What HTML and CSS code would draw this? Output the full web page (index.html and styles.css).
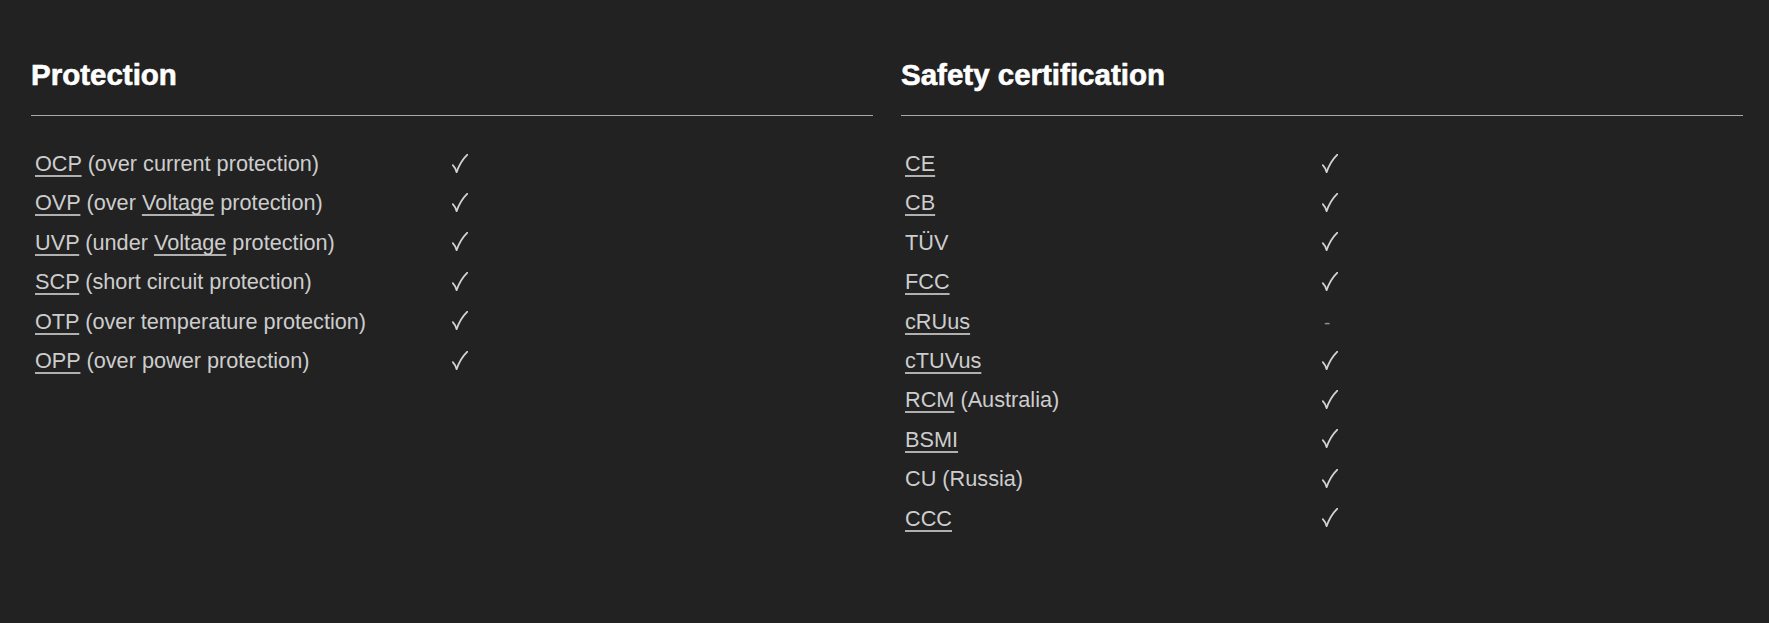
FILE: index.html
```html
<!DOCTYPE html>
<html lang="en">
<head>
<meta charset="utf-8">
<title>Specs</title>
<link rel="stylesheet" href="styles.css">
</head>
<body>
<svg width="0" height="0" class="defs" aria-hidden="true">
  <symbol id="check" viewBox="0 0 16 19">
    <path d="M0.8 11.2 Q3.2 13.6 4.6 18.2 Q8.2 7.6 15.4 0.6" fill="none" stroke="currentColor" stroke-width="1.8" stroke-linecap="round" stroke-linejoin="round"/>
  </symbol>
</svg>
<div class="specs">
  <section class="spec">
    <h2 class="spec-title">Protection</h2>
    <div class="spec-rows">
      <div class="label"><abbr>OCP</abbr> (over current protection)</div><div class="value"><svg class="check"><use href="#check"/></svg></div>
      <div class="label"><abbr>OVP</abbr> (over <abbr>Voltage</abbr> protection)</div><div class="value"><svg class="check"><use href="#check"/></svg></div>
      <div class="label"><abbr>UVP</abbr> (under <abbr>Voltage</abbr> protection)</div><div class="value"><svg class="check"><use href="#check"/></svg></div>
      <div class="label"><abbr>SCP</abbr> (short circuit protection)</div><div class="value"><svg class="check"><use href="#check"/></svg></div>
      <div class="label"><abbr>OTP</abbr> (over temperature protection)</div><div class="value"><svg class="check"><use href="#check"/></svg></div>
      <div class="label"><abbr>OPP</abbr> (over power protection)</div><div class="value"><svg class="check"><use href="#check"/></svg></div>
    </div>
  </section>
  <section class="spec">
    <h2 class="spec-title">Safety certification</h2>
    <div class="spec-rows">
      <div class="label"><abbr>CE</abbr></div><div class="value"><svg class="check"><use href="#check"/></svg></div>
      <div class="label"><abbr>CB</abbr></div><div class="value"><svg class="check"><use href="#check"/></svg></div>
      <div class="label">TÜV</div><div class="value"><svg class="check"><use href="#check"/></svg></div>
      <div class="label"><abbr>FCC</abbr></div><div class="value"><svg class="check"><use href="#check"/></svg></div>
      <div class="label"><abbr>cRUus</abbr></div><div class="value dash">-</div>
      <div class="label"><abbr>cTUVus</abbr></div><div class="value"><svg class="check"><use href="#check"/></svg></div>
      <div class="label"><abbr>RCM</abbr> (Australia)</div><div class="value"><svg class="check"><use href="#check"/></svg></div>
      <div class="label"><abbr>BSMI</abbr></div><div class="value"><svg class="check"><use href="#check"/></svg></div>
      <div class="label">CU (Russia)</div><div class="value"><svg class="check"><use href="#check"/></svg></div>
      <div class="label"><abbr>CCC</abbr></div><div class="value"><svg class="check"><use href="#check"/></svg></div>
    </div>
  </section>
</div>
</body>
</html>
```

FILE: styles.css
```css
html, body {
  margin: 0;
  padding: 0;
  background: #222222;
}

body {
  font-family: "Liberation Sans", Arial, sans-serif;
  color: #cdcdcd;
}

.defs {
  position: absolute;
  width: 0;
  height: 0;
  overflow: hidden;
}

.specs {
  display: grid;
  grid-template-columns: 842px 842px;
  column-gap: 28px;
  padding: 57px 0 0 31px;
}

.spec-title {
  margin: 0;
  font-size: 29.5px;
  line-height: 35px;
  font-weight: 700;
  color: #ffffff;
  -webkit-text-stroke: 0.6px #ffffff;
  padding-bottom: 23px;
  border-bottom: 1px solid #a9a9a9;
}

.spec-rows {
  display: grid;
  grid-template-columns: 421px 1fr;
  grid-auto-rows: 39.4px;
  padding-top: 28px;
  font-size: 21.7px;
  line-height: 39.4px;
}

.label {
  padding-left: 4px;
  white-space: nowrap;
}

abbr {
  text-decoration: underline;
  text-decoration-color: #b0b0b0;
  text-decoration-thickness: 2px;
  text-underline-offset: 4px;
  text-decoration-skip-ink: none;
}

.value {
  display: flex;
  align-items: center;
  color: #d2d2d2;
}

.check {
  width: 16px;
  height: 19px;
  margin-top: -1px;
}

.value.dash {
  font-size: 19px;
  color: #909090;
  padding-left: 2px;
  padding-top: 2px;
}
```
